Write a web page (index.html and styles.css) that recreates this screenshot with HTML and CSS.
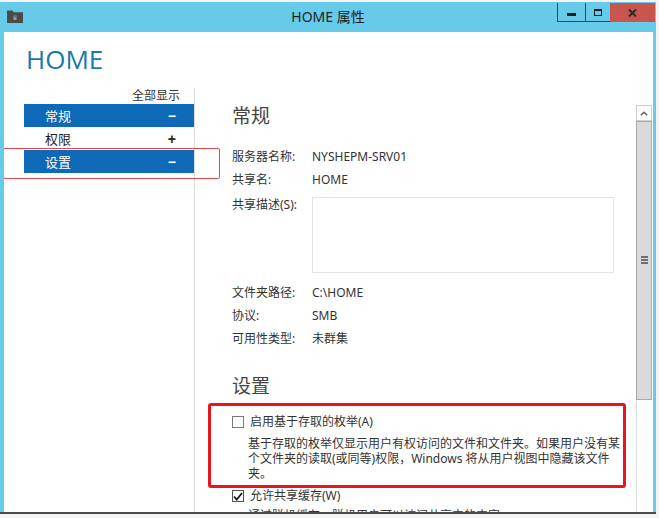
FILE: index.html
```html
<!DOCTYPE html>
<html lang="zh-CN">
<head>
<meta charset="utf-8">
<title>HOME 属性</title>
<link rel="stylesheet" href="styles.css">
</head>
<body>
<div class="window">
  <div class="titlebar">
    <div class="tb-left">
      <svg class="app-icon" width="16" height="13" viewBox="0 0 16 13">
        <path d="M0 0.5h5.5l1.2 1.8H16V13H0z" fill="#4b4b4b"/>
        <path d="M6.5 5.5h3v4.5h-3z" fill="#9a9a9a"/>
        <path d="M7.3 6.3h1.4v1h-1.4z" fill="#4b4b4b"/>
      </svg>
    </div>
    <div class="title">HOME 属性</div>
    <div class="caption-buttons">
      <div class="cbtn min"><span class="min-glyph"></span></div>
      <div class="cbtn max"><span class="max-glyph"></span></div>
      <div class="cbtn close">
        <svg width="9" height="8" viewBox="0 0 9 8"><path d="M1 0.5l7 7M8 0.5l-7 7" stroke="#2a2a2a" stroke-width="2"/></svg>
      </div>
    </div>
  </div>
  <div class="client">
    <h1 class="page-title">HOME</h1>
    <div class="main">
      <div class="nav">
        <div class="show-all">全部显示</div>
        <div class="nav-item active"><span>常规</span><span class="sign">−</span></div>
        <div class="nav-item"><span>权限</span><span class="sign">+</span></div>
        <div class="nav-item active"><span>设置</span><span class="sign">−</span></div>
        <div class="annot-nav"></div>
      </div>
      <div class="pane">
        <div class="content">
          <h2 class="section-title">常规</h2>
          <div class="info-row"><span class="label">服务器名称:</span><span>NYSHEPM-SRV01</span></div>
          <div class="info-row"><span class="label">共享名:</span><span>HOME</span></div>
          <div class="info-row desc-row"><span class="label">共享描述(S):</span><div class="textarea"></div></div>
          <div class="info-group">
            <div class="info-row"><span class="label">文件夹路径:</span><span>C:\HOME</span></div>
            <div class="info-row"><span class="label">协议:</span><span>SMB</span></div>
            <div class="info-row"><span class="label">可用性类型:</span><span>未群集</span></div>
          </div>
          <h2 class="section-title settings-title">设置</h2>
          <div class="annot-box">
            <div class="check-row"><span class="checkbox"></span><span>启用基于存取的枚举(A)</span></div>
            <p class="option-desc">基于存取的枚举仅显示用户有权访问的文件和文件夹。如果用户没有某<br>个文件夹的读取(或同等)权限，Windows 将从用户视图中隐藏该文件<br>夹。</p>
          </div>
          <div class="check-row plain"><span class="checkbox checked"><svg width="10" height="9" viewBox="0 0 10 9"><path d="M1 4.5l2.8 3L9 1" fill="none" stroke="#1a1a1a" stroke-width="1.8"/></svg></span><span>允许共享缓存(W)</span></div>
          <p class="option-desc cut">通过脱机缓存，脱机用户可以访问共享中的内容。</p>
        </div>
        <div class="scrollbar">
          <div class="sb-up"><svg width="8" height="5" viewBox="0 0 8 5"><path d="M0.8 4.2L4 1.2l3.2 3" fill="none" stroke="#606060" stroke-width="1.5"/></svg></div>
          <div class="sb-thumb"><span class="grip"></span></div>
          <div class="sb-track"></div>
        </div>
      </div>
    </div>
  </div>
</div>
</body>
</html>
```

FILE: styles.css
```css
html, body {
  margin: 0;
  padding: 0;
}
body {
  background: #f3f3f3;
  padding-top: 2px;
  font-family: "Segoe UI", "Noto Sans", "Noto Sans CJK SC", sans-serif;
  color: #333;
}
.window {
  width: 656px;
  background: #66cbe9;
  border-bottom: 2px solid #4a4a4a;
}
.titlebar {
  height: 30px;
  display: grid;
  grid-template-columns: 1fr auto 1fr;
  align-items: start;
}
.tb-left {
  padding: 8px 0 0 7px;
}
.app-icon {
  display: block;
}
.title {
  font-size: 14px;
  line-height: 30px;
  color: #1e1e1e;
}
.caption-buttons {
  justify-self: end;
  display: flex;
  margin-top: 1px;
  margin-right: 1px;
}
.cbtn {
  height: 19px;
  display: flex;
  align-items: center;
  justify-content: center;
  box-sizing: border-box;
}
.cbtn.min {
  width: 28px;
  border-left: 1px solid #3d3d3d;
  border-bottom: 1px solid #3d3d3d;
}
.cbtn.max {
  width: 25px;
  border-left: 1px solid #3d3d3d;
  border-bottom: 1px solid #3d3d3d;
}
.cbtn.close {
  width: 45px;
  background: #c9564e;
}
.min-glyph {
  display: block;
  width: 9px;
  height: 3px;
  background: #1e1e1e;
  margin-top: 5px;
}
.max-glyph {
  display: block;
  width: 8px;
  height: 7px;
  box-sizing: border-box;
  border: 1.5px solid #1e1e1e;
  border-top-width: 2.5px;
}
.client {
  margin: 0 3px 0 4px;
  height: 480px;
  background: #fff;
  overflow: hidden;
  display: flex;
  flex-direction: column;
}
.page-title {
  margin: 0;
  padding: 11px 0 0 22px;
  font-size: 26px;
  line-height: 32px;
  font-weight: 400;
  color: #1b79a6;
  height: 45px;
  font-family: "Segoe UI", "Open Sans", "Noto Sans", sans-serif;
}
.main {
  flex: 1;
  display: flex;
  min-height: 0;
}
.nav {
  width: 190px;
  flex: none;
  border-right: 1px solid #dcdcdc;
  position: relative;
  z-index: 2;
}
.show-all {
  text-align: right;
  padding-right: 14px;
  font-size: 12px;
  line-height: 16px;
  color: #333;
}
.nav-item {
  margin-left: 20px;
  height: 23px;
  display: flex;
  align-items: center;
  justify-content: space-between;
  padding: 0 18px 0 21px;
  font-size: 13px;
  color: #222;
}
.nav-item.active {
  background: #0e6ab6;
  color: #fff;
}
.sign {
  font-weight: bold;
  font-size: 14px;
  font-family: "Liberation Sans", sans-serif;
}
.annot-nav {
  position: absolute;
  left: -1px;
  top: 60px;
  width: 217px;
  height: 31px;
  box-sizing: border-box;
  border: 1.5px solid #e2474c;
  border-radius: 2px;
}
.pane {
  flex: 1;
  display: flex;
  min-width: 0;
  overflow: hidden;
}
.content {
  flex: 1;
  padding-left: 37px;
  overflow: hidden;
  font-size: 12px;
}
.section-title {
  margin: 16px 0 17px;
  font-size: 19px;
  line-height: 24px;
  font-weight: normal;
  color: #444;
}
.info-row {
  display: grid;
  grid-template-columns: 80px 1fr;
  line-height: 23px;
  font-size: 12px;
  color: #333;
}
.desc-row {
  align-items: start;
  padding-top: 2px;
}
.textarea {
  width: 302px;
  height: 76px;
  box-sizing: border-box;
  border: 1px solid #e4e4e8;
  margin-top: 4px;
}
.info-group {
  margin-top: 8px;
}
.settings-title {
  margin: 24px 0 5px;
}
.annot-box {
  margin-left: -24px;
  width: 418px;
  box-sizing: border-box;
  border: 3px solid #e8141f;
  border-radius: 3px;
  padding: 7px 0 4px 21px;
}
.check-row {
  display: flex;
  align-items: center;
  gap: 6px;
  line-height: 18px;
  font-size: 12px;
  color: #333;
}
.check-row.plain {
  line-height: 16px;
}
.checkbox {
  width: 12px;
  height: 12px;
  box-sizing: border-box;
  border: 1px solid #7a7a7a;
  background: #fff;
  display: flex;
  align-items: center;
  justify-content: center;
  flex: none;
}
.checkbox.checked {
  border-color: #555;
}
.option-desc {
  margin: 5px 0 0 16px;
  font-size: 12px;
  line-height: 15px;
  color: #333;
}
.option-desc.cut {
  margin-top: 4px;
  white-space: nowrap;
}
.scrollbar {
  width: 16px;
  flex: none;
  margin: 17px 1px 0 0;
  display: flex;
  flex-direction: column;
}
.sb-up {
  height: 16px;
  box-sizing: border-box;
  border: 1px solid #cfcfcf;
  background: #fff;
  display: flex;
  align-items: center;
  justify-content: center;
}
.sb-thumb {
  height: 279px;
  box-sizing: border-box;
  background: #dadada;
  border: 1px solid #a9a9a9;
  display: flex;
  align-items: center;
  justify-content: center;
}
.grip {
  display: block;
  width: 7px;
  height: 9px;
  background: repeating-linear-gradient(to bottom, #707070 0 2px, #dadada 2px 3px);
}
.sb-track {
  flex: 1;
  border-left: 1px solid #dcdcdc;
  background: #fff;
}
```
